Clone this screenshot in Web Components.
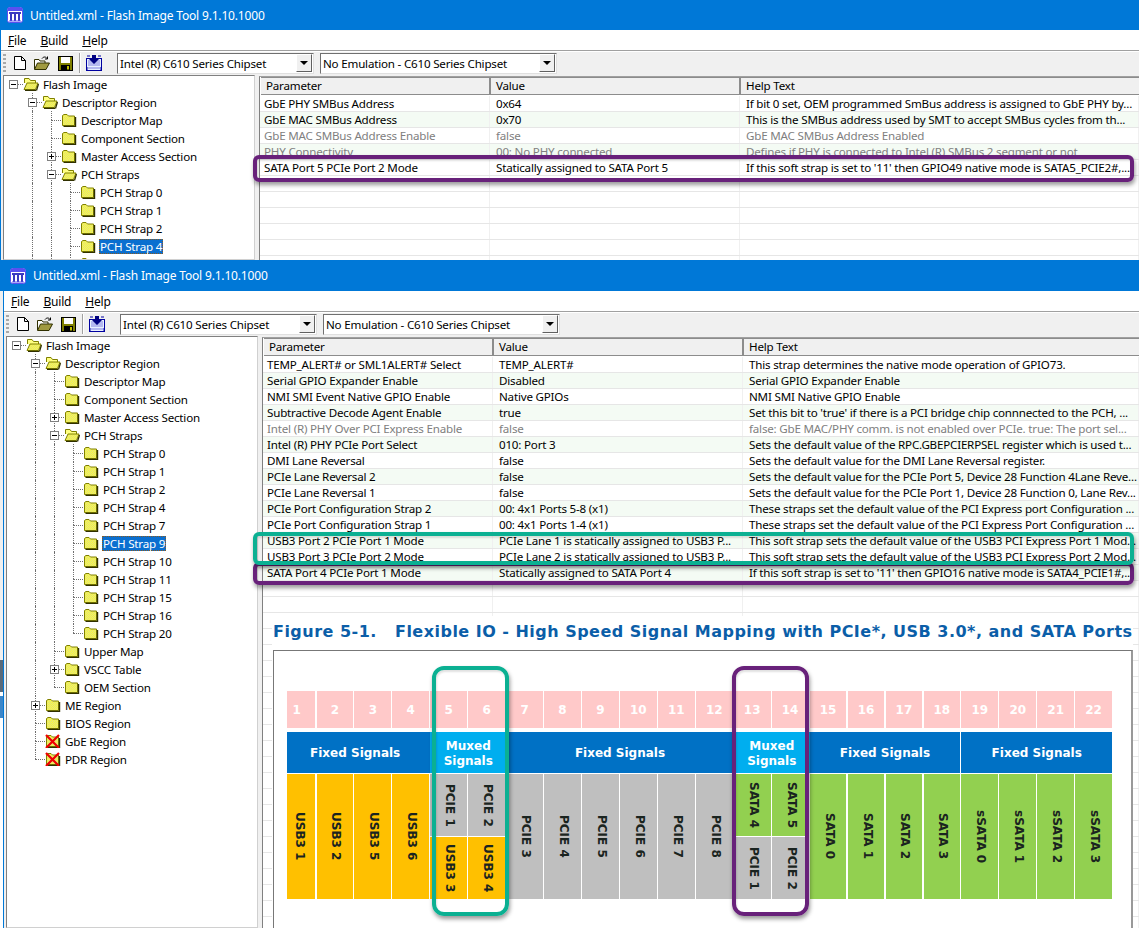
<!DOCTYPE html>
<html><head><meta charset="utf-8"><title>Flash Image Tool</title>
<style>
html,body{margin:0;padding:0;background:#fff;overflow:hidden}
body{width:1139px;height:928px;position:relative;font:11.6px "Noto Sans",sans-serif;letter-spacing:-.2px;display:flex;flex-direction:column}
</style></head><body>
<tool-window title-text="Untitled.xml - Flash Image Tool 9.1.10.1000" title-h="30" style="height:260px" data-tree="a" data-table="a"></tool-window>
<tool-window title-text="Untitled.xml - Flash Image Tool 9.1.10.1000" title-h="31" style="height:668px;margin-left:3px" data-tree="b" data-table="b"></tool-window>
<edge-strip></edge-strip>
<flex-figure></flex-figure>
<mark-box color="#68217a" x="253" y="155" w="881" h="27"></mark-box>
<mark-box color="#68217a" x="253" y="562" w="881" h="23"></mark-box>
<mark-box color="#0bb092" x="253" y="532" w="881" h="33"></mark-box>
<mark-box color="#0bb092" x="432" y="666" w="77" h="250" r="12"></mark-box>
<mark-box color="#68217a" x="732" y="666" w="77" h="250" r="12"></mark-box>
<script>
const FOLDER_DEFS=`<defs><pattern id="d" width="2" height="2" patternUnits="userSpaceOnUse"><rect width="2" height="2" fill="#ffff30"/><rect width="1" height="1" fill="#dcdc90"/><rect x="1" y="1" width="1" height="1" fill="#dcdc90"/></pattern></defs>`;
function folder(open,x){
  const body=open
   ?`<path d="M1.5 6V1.5H6L7.5 3.5H12.5V6" fill="#ffff80" stroke="#808000"/><path d="M1 12.5L4 6H15L12.5 12.5Z" fill="url(#d)" stroke="#808000"/><path d="M13 13.5H2M15.5 7L13.5 13.5" stroke="#303000" fill="none" stroke-width="1.3"/>`
   :`<path d="M1.5 12.5V2.5L3 1.5H6L7.5 3H13.5V12.5Z" fill="url(#d)" stroke="#808000"/><path d="M14.5 4V13.5H2.5" stroke="#303000" fill="none" stroke-width="1.4"/>`;
  const cross=x?`<path d="M1 1L14 14M14 1L1 14" stroke="#f00000" stroke-width="2.2"/>`:'';
  return `<svg width="16" height="14" viewBox="0 0 16 14" aria-hidden="true">${FOLDER_DEFS}${body}${cross}</svg>`;
}
const TREES={
a:[[0,'Flash Image','-',1],[1,'Descriptor Region','-',1],[2,'Descriptor Map'],[2,'Component Section'],[2,'Master Access Section','+'],[2,'PCH Straps','-',1],
[3,'PCH Strap 0'],[3,'PCH Strap 1'],[3,'PCH Strap 2'],[3,'PCH Strap 4','',0,0,1],[3,''],[2,''],[1,'']],
b:[[0,'Flash Image','-',1],[1,'Descriptor Region','-',1],[2,'Descriptor Map'],[2,'Component Section'],[2,'Master Access Section','+'],[2,'PCH Straps','-',1],
[3,'PCH Strap 0'],[3,'PCH Strap 1'],[3,'PCH Strap 2'],[3,'PCH Strap 4'],[3,'PCH Strap 7'],[3,'PCH Strap 9','',0,0,1],[3,'PCH Strap 10'],[3,'PCH Strap 11'],[3,'PCH Strap 15'],[3,'PCH Strap 16'],[3,'PCH Strap 20'],
[2,'Upper Map'],[2,'VSCC Table','+'],[2,'OEM Section'],[1,'ME Region','+'],[1,'BIOS Region'],[1,'GbE Region','',0,1],[1,'PDR Region','',0,1]]
};
const TABLES={
a:[['GbE PHY SMBus Address','0x64','If bit 0 set, OEM programmed SmBus address is assigned to GbE PHY by...'],
['GbE MAC SMBus Address','0x70','This is the SMBus address used by SMT to accept SMBus cycles from th...'],
['GbE MAC SMBus Address Enable','false','GbE MAC SMBus Address Enabled',1],
['PHY Connectivity','00: No PHY connected','Defines if PHY is connected to Intel (R) SMBus 2 segment or not',1],
['SATA Port 5 PCIe Port 2 Mode','Statically assigned to SATA Port 5',"If this soft strap is set to '11' then GPIO49 native mode is SATA5_PCIE2#,..."]],
b:[['TEMP_ALERT# or SML1ALERT# Select','TEMP_ALERT#','This strap determines the native mode operation of GPIO73.'],
['Serial GPIO Expander Enable','Disabled','Serial GPIO Expander Enable'],
['NMI SMI Event Native GPIO Enable','Native GPIOs','NMI SMI Native GPIO Enable'],
['Subtractive Decode Agent Enable','true',"Set this bit to 'true' if there is a PCI bridge chip connnected to the PCH, ..."],
['Intel (R) PHY Over PCI Express Enable','false','false: GbE MAC/PHY comm. is not enabled over PCIe. true: The port sel...',1],
['Intel (R) PHY PCIe Port Select','010: Port 3','Sets the default value of the RPC.GBEPCIERPSEL register which is used t...'],
['DMI Lane Reversal','false','Sets the default value for the DMI Lane Reversal register.'],
['PCIe Lane Reversal 2','false','Sets the default value for the PCIe Port 5, Device 28 Function 4Lane Reve...'],
['PCIe Lane Reversal 1','false','Sets the default value for the PCIe Port 1, Device 28 Function 0, Lane Rev...'],
['PCIe Port Configuration Strap 2','00: 4x1 Ports 5-8 (x1)','These straps set the default value of the PCI Express port Configuration ...'],
['PCIe Port Configuration Strap 1','00: 4x1 Ports 1-4 (x1)','These straps set the default value of the PCI Express Port Configuration ...'],
['USB3 Port 2 PCIe Port 1 Mode','PCIe Lane 1 is statically assigned to USB3 P...','This soft strap sets the default value of the USB3 PCI Express Port 1 Mod...'],
['USB3 Port 3 PCIe Port 2 Mode','PCIe Lane 2 is statically assigned to USB3 P...','This soft strap sets the default value of the USB3 PCI Express Port 2 Mod...'],
['SATA Port 4 PCIe Port 1 Mode','Statically assigned to SATA Port 4',"If this soft strap is set to '11' then GPIO16 native mode is SATA4_PCIE1#,..."]]
};
class ToolWindow extends HTMLElement{
 connectedCallback(){
  const s=this.attachShadow({mode:'open'});
  const t=this.getAttribute('title-text'),h=this.getAttribute('title-h');
  s.innerHTML=`<style>
  :host{display:flex;flex-direction:column;overflow:hidden;background:#f0f0f0;border-left:1px solid #0078d7;box-sizing:border-box;flex:none}
  .title{height:${h}px;flex:none;background:#0078d7;color:#fff;display:flex;align-items:center;gap:7px;padding-left:7px;font-size:12px;letter-spacing:-.17px;margin-left:-1px}
  .menu{height:20px;flex:none;background:#fff;display:flex;padding-left:7px;align-items:center;color:#000;font-size:12px}
  .menu span{margin-right:14px} .menu u{text-decoration-thickness:1px;text-underline-offset:1px}
  .bars{height:25px;flex:none;box-sizing:border-box;border-top:1px solid #a0a0a0;box-shadow:inset 0 1px #fff;display:flex;align-items:center;padding-left:2px;background:#f0f0f0}
  .grip{width:3px;height:18px;background:repeating-linear-gradient(#a8a8a8 0 2px,transparent 2px 4px);margin-right:7px}
  .ic{display:flex;flex:none}
  .sep{width:1px;height:20px;background:#a0a0a0;margin:0 6px 0 6px;box-shadow:1px 0 #fff}
  combo-box{margin-right:6px}
  .main{flex:1;min-height:0;display:flex}
  tree-view{width:252px;flex:none;margin-left:2px}
  prop-table{flex:1;min-width:0;margin-left:4px;margin-top:1px}
  </style>
  <div class="title"><svg width="16" height="16" viewBox="0 0 16 16" aria-hidden="true"><rect x=".5" y=".5" width="15" height="15" rx="2" fill="#fff" stroke="#5a50f0"/><rect x="1" y="1" width="14" height="3" fill="#5a50f0"/><rect x="2" y="5" width="12" height="2" fill="#3a3ac0"/><path d="M4 7v7M8 7v7M12 7v7" stroke="#3a3ac0" stroke-width="2"/><path d="M2 14h12" stroke="#5a50f0"/></svg><span>${t}</span></div>
  <div class="menu"><span><u>F</u>ile</span><span><u>B</u>uild</span><span><u>H</u>elp</span></div>
  <div class="bars"><div class="grip"></div>
   <svg class="ic" width="14" height="14" viewBox="0 0 14 14" style="margin-right:7px" aria-hidden="true"><path d="M1.5.5H8.5L12.5 4.5V13.5H1.5Z M8.5.5V4.5H12.5" fill="#fff" stroke="#000"/></svg>
   <svg class="ic" width="16" height="14" viewBox="0 0 16 14" style="margin-right:8px" aria-hidden="true"><path d="M.5 13V3.5H5L6 5H11V7" fill="#fff" stroke="#303000"/><path d="M.5 13.5L3.5 7H15.5L12 13.5Z" fill="#a09a40" stroke="#303000"/><path d="M8 2.5C9.5.5 12 .5 13 2.5M13.5 .5V3H11" fill="none" stroke="#000"/></svg>
   <svg class="ic" width="15" height="15" viewBox="0 0 15 15" aria-hidden="true"><rect x=".5" y=".5" width="14" height="14" fill="#808000" stroke="#000"/><rect x="3" y="1" width="9" height="6" fill="#fff"/><rect x="3" y="9" width="9" height="5.5" fill="#000"/><rect x="9" y="10" width="2" height="3.5" fill="#c0c000"/></svg>
   <div class="sep"></div>
   <svg class="ic" width="16" height="16" viewBox="0 0 16 16" style="margin-right:15px" aria-hidden="true"><rect x=".5" y="3.5" width="15" height="12" fill="#e8f0ff" stroke="#0000a0"/><path d="M2 6h12M2 8h12M2 10h12M2 13h12" stroke="#8080e0"/><path d="M6 0h4v4h3l-5 5-5-5h3z" fill="#000080"/><path d="M1 1h3M12 1h3M1 15V12M15 15V12" stroke="#0000a0"/></svg>
   <combo-box w="197" text="Intel (R) C610 Series Chipset"></combo-box>
   <combo-box w="237" text="No Emulation - C610 Series Chipset"></combo-box>
  </div>
  <div class="main"><tree-view data-k="${this.dataset.tree}"></tree-view><prop-table data-k="${this.dataset.table}"></prop-table></div>`;
 }
}
class ComboBox extends HTMLElement{
 connectedCallback(){
  const s=this.attachShadow({mode:'open'});
  s.innerHTML=`<style>
  :host{display:flex;flex:none;width:${this.getAttribute('w')}px;height:21px;box-sizing:border-box;background:#fff;border:1px solid;border-color:#707070 #e0e0e0 #e0e0e0 #707070;align-items:center;padding-left:2px;justify-content:space-between}
  b{width:16px;height:18px;background:#f0f0f0;border:1px solid;border-color:#fff #606060 #606060 #fff;box-sizing:border-box;display:flex;align-items:center;justify-content:center;margin-right:1px}
  i{border:4px solid transparent;border-top:4px solid #000;border-bottom:0}
  span{white-space:nowrap}
  </style><span>${this.getAttribute('text')}</span><b><i></i></b>`;
 }
}
class TreeView extends HTMLElement{
 connectedCallback(){
  const s=this.attachShadow({mode:'open'});
  const d=TREES[this.dataset.k];
  const hasNext=(i,l)=>{for(let j=i+1;j<d.length;j++){if(d[j][0]<l)return false;if(d[j][0]==l)return true}return false};
  const rows=d.map((r,i)=>{
    const [dep,label,box,open,x,sel]=r;let g='';
    for(let l=0;l<dep;l++)g+=`<span class="g ${l>0&&hasNext(i,l)?'v':''}"></span>`;
    const more=dep>0&&hasNext(i,dep);
    const ef=dep>0?`<i class="up"></i>${more?'<i class="dn"></i>':''}`:'';
    const bx=box?`<em>${box=='+'?'<s class="p"></s>':''}<s></s></em>`:'';
    return `<div class="r">${g}<span class="g e">${ef}<i class="h"></i>${bx}</span><span class="f">${folder(open,x)}</span>${label?`<span class="t ${sel?'sel':''}">${label}</span>`:''}</div>`;
  }).join('');
  s.innerHTML=`<style>
  :host{display:block;box-sizing:border-box;background:#fff;border:1px solid;border-color:#808080 #d0d0d0 #d0d0d0 #808080;overflow:hidden}
  .r{height:18px;display:flex;align-items:center;white-space:nowrap;position:relative}
  .r:first-of-type{margin-top:-1px}
  .g{width:19px;height:18px;flex:none;position:relative;display:block}
  .g.v::before{content:"";position:absolute;left:9px;top:0;bottom:0;border-left:1px dotted #707070}
  .e i{position:absolute;display:block}
  .up{left:9px;top:0;height:9px;border-left:1px dotted #707070}
  .dn{left:9px;top:9px;height:9px;border-left:1px dotted #707070}
  .h{left:9px;top:9px;width:10px;border-top:1px dotted #707070}
  em{position:absolute;left:5px;top:5px;width:9px;height:9px;box-sizing:border-box;border:1px solid #808080;background:#fff}
  em s{position:absolute;left:1px;top:3px;width:5px;height:1px;background:#000}
  em s.p{left:3px;top:1px;width:1px;height:5px}
  .f{display:flex;width:16px;flex:none;margin-right:1px}
  .t{margin-left:2px;padding:0 1px;line-height:15px;color:#000}
  .sel{background:#0a6fd0;color:#fff;outline:1px dotted #8a5a20;outline-offset:-1px}
  </style>${rows}`;
 }
}
class PropTable extends HTMLElement{
 connectedCallback(){
  const s=this.attachShadow({mode:'open'});
  const d=TABLES[this.dataset.k];let rows='';
  d.forEach((r,i)=>{rows+=`<div class="r ${i%2?'alt':''} ${r[3]?'dis':''}"><span>${r[0]}</span><span>${r[1]}</span><span>${r[2]}</span></div>`});
  for(let i=0;i<26;i++)rows+=`<div class="r"><span></span><span></span><span></span></div>`;
  s.innerHTML=`<style>
  :host{display:block;box-sizing:border-box;background:#fff;border-left:1px solid #808080;border-top:1px solid #a0a0a0;overflow:hidden}
  .hd,.r{display:grid;grid-template-columns:230px 250px 1fr}
  .hd{background:#f0f0f0;border-top:1px solid #8c8c8c;border-bottom:1px solid #8c8c8c;margin:0 0 1px 1px;height:16px}
  .hd span{padding-left:5px;line-height:16px;border-right:2px solid #8c8c8c;box-sizing:border-box}
  .hd span:last-child{border-right:0}
  .r{height:16px;box-sizing:border-box;border-bottom:1px solid #e6e6e6}
  .r span{padding-left:6px;line-height:15px;white-space:nowrap;overflow:hidden;border-right:1px solid #f0f0f0;box-sizing:border-box}
  .r span:first-child{padding-left:4px}
  .alt{background:#f4fbf4}.dis{color:#808080}
  </style><div class="hd"><span>Parameter</span><span>Value</span><span>Help Text</span></div>${rows}`;
 }
}
class EdgeStrip extends HTMLElement{
 connectedCallback(){
  this.attachShadow({mode:'open'}).innerHTML=`<style>:host{position:absolute;left:0;top:260px;width:3px;height:668px;background:linear-gradient(#0078d7 0 31px,#f0f0f0 31px 400px,#5a6a7a 400px 432px,#fff 432px 436px,#3c86c8 436px 458px,#fff 458px)}</style>`;
 }
}
class FlexFigure extends HTMLElement{
 connectedCallback(){
  const s=this.attachShadow({mode:'open'});
  let nums='';for(let i=1;i<=22;i++)nums+=`<div class="n ${i==1?'first':''}">${i}</div>`;
  const v=(t,c,x='')=>`<div class="v ${c} ${x}"><span>${t}</span></div>`;
  const mux=(a,ac,b,bc)=>`<div class="mx">${v(a,ac)}${v(b,bc)}</div>`;
  const cols=[v('USB3 1','y','first'),v('USB3 2','y'),v('USB3 5','y'),v('USB3 6','y'),
   mux('PCIE 1','g','USB3 3','y'),mux('PCIE 2','g','USB3 4','y'),
   v('PCIE 3','g'),v('PCIE 4','g'),v('PCIE 5','g'),v('PCIE 6','g'),v('PCIE 7','g'),v('PCIE 8','g'),
   mux('SATA 4','l','PCIE 1','g'),mux('SATA 5','l','PCIE 2','g'),
   v('SATA 0','l'),v('SATA 1','l'),v('SATA 2','l'),v('SATA 3','l'),
   v('sSATA 0','l'),v('sSATA 1','l'),v('sSATA 2','l'),v('sSATA 3','l')].join('');
  s.innerHTML=`<style>
  :host{position:absolute;left:272px;top:616px;width:861px;height:312px;background:#fff;font-family:"DejaVu Sans",sans-serif;letter-spacing:0;display:flex;flex-direction:column;box-sizing:border-box}
  h2{margin:0 0 0 1px;height:34px;flex:none;font-size:16px;line-height:31px;font-weight:700;color:#0b5ea8;white-space:pre;letter-spacing:.48px}
  .box{flex:1;border:1px solid #777;border-right:2px solid #999;border-bottom:0;padding:40px 0 0 13px;margin-left:1px;background:#fff}
  .grid{display:grid;grid-template-columns:29.5px repeat(21,37.95px);grid-template-rows:41px 42px 125px;font-weight:700;font-size:12px}
  .n{background:#ffc9c9;color:#fff;margin-right:1.2px;display:flex;align-items:center;justify-content:center;height:37px;padding-top:1px;box-sizing:border-box}
  .n.first{padding-right:9px}
  .b{grid-row:2;background:#0071c5;color:#fff;display:flex;align-items:center;justify-content:center;text-align:center;line-height:14.5px;height:41px;padding-top:2px;box-sizing:border-box}
  .b.m{background:#00aeef}
  .v{writing-mode:vertical-rl;display:flex;align-items:center;justify-content:center;margin-right:1.2px;color:#1a2420;padding-left:3px;box-sizing:border-box;height:100%;white-space:nowrap}
  .v.first{padding-left:0;padding-right:3px}
  .y{background:#ffc000}.g{background:#bfbfbf}.l{background:#92d050}
  .mx{display:grid;grid-template-rows:1fr 1fr;row-gap:1px;height:125px}
  </style>
  <h2>Figure 5-1.   Flexible IO - High Speed Signal Mapping with PCIe*, USB 3.0*, and SATA Ports</h2>
  <div class="box"><div class="grid">${nums}
   <div class="b" style="grid-column:1/5;padding-right:7px">Fixed Signals</div>
   <div class="b m" style="grid-column:5/7">Muxed<br>Signals</div>
   <div class="b" style="grid-column:7/13">Fixed Signals</div>
   <div class="b m" style="grid-column:13/15">Muxed<br>Signals</div>
   <div class="b" style="grid-column:15/19;margin-right:1.2px">Fixed Signals</div>
   <div class="b" style="grid-column:19/23;margin-right:1.2px">Fixed Signals</div>
   ${cols}</div></div>`;
 }
}
class MarkBox extends HTMLElement{
 connectedCallback(){
  const a=n=>this.getAttribute(n);
  this.attachShadow({mode:'open'}).innerHTML=`<style>:host{position:absolute;left:${a('x')}px;top:${a('y')}px;width:${a('w')}px;height:${a('h')}px;box-sizing:border-box;border:4px solid ${a('color')};border-radius:${a('r')||6}px;box-shadow:1px 3px 4px rgba(0,0,0,.4),inset 1px 2px 2px rgba(0,0,0,.12);pointer-events:none}</style>`;
 }
}
customElements.define('combo-box',ComboBox);
customElements.define('tree-view',TreeView);
customElements.define('prop-table',PropTable);
customElements.define('tool-window',ToolWindow);
customElements.define('edge-strip',EdgeStrip);
customElements.define('flex-figure',FlexFigure);
customElements.define('mark-box',MarkBox);
</script>
</body></html>
